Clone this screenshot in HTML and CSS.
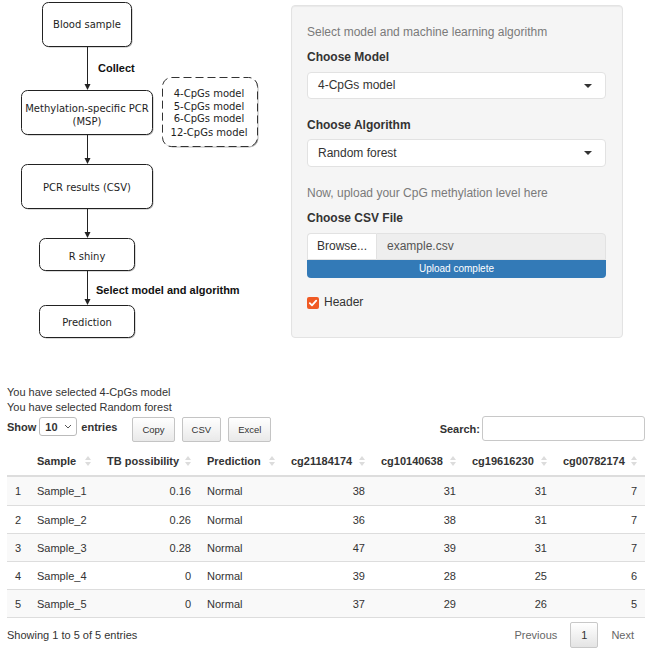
FILE: index.html
```html
<!DOCTYPE html>
<html>
<head>
<meta charset="utf-8">
<title>TB prediction</title>
<link rel="stylesheet" href="styles.css">
</head>
<body>
<div class="top">
  <svg class="flow" width="284" height="340" viewBox="0 0 284 340">
    <g class="shadow">
      <rect x="43.5" y="3.5" width="89" height="44" rx="6"/>
      <rect x="22.5" y="91.5" width="131" height="44" rx="6"/>
      <rect x="22.5" y="165.5" width="131" height="44" rx="6"/>
      <rect x="40.5" y="239.5" width="95" height="32" rx="6"/>
      <rect x="40.5" y="306.5" width="95" height="32" rx="6"/>
      <rect x="163.5" y="78.5" width="95" height="69" rx="9"/>
    </g>
    <g class="box">
      <rect x="42.5" y="2.5" width="89" height="44" rx="6"/>
      <rect x="21.5" y="90.5" width="131" height="44" rx="6"/>
      <rect x="21.5" y="164.5" width="131" height="44" rx="6"/>
      <rect x="39.5" y="238.5" width="95" height="32" rx="6"/>
      <rect x="39.5" y="305.5" width="95" height="32" rx="6"/>
    </g>
    <rect class="dash" x="162.5" y="77.5" width="95" height="69" rx="9"/>
    <g class="arrow">
      <line x1="87.5" y1="47" x2="87.5" y2="85"/>
      <line x1="87.5" y1="135" x2="87.5" y2="159"/>
      <line x1="87.5" y1="209" x2="87.5" y2="233"/>
      <line x1="87.5" y1="271" x2="87.5" y2="300"/>
    </g>
    <g class="head">
      <polygon points="84.5,84 90.5,84 87.5,90"/>
      <polygon points="84.5,158 90.5,158 87.5,164"/>
      <polygon points="84.5,232 90.5,232 87.5,238"/>
      <polygon points="84.5,299 90.5,299 87.5,305"/>
    </g>
    <g class="ftxt">
      <text x="87" y="28">Blood sample</text>
      <text x="87" y="111.5">Methylation-specific PCR</text>
      <text x="87" y="124.5">(MSP)</text>
      <text x="87" y="190.5">PCR results (CSV)</text>
      <text x="87" y="259.5">R shiny</text>
      <text x="87" y="325.5">Prediction</text>
      <text x="209" y="96.5">4-CpGs model</text>
      <text x="209" y="109.5">5-CpGs model</text>
      <text x="209" y="122">6-CpGs model</text>
      <text x="209" y="135.5">12-CpGs model</text>
    </g>
    <g class="etxt">
      <text x="98" y="72">Collect</text>
      <text x="96" y="294">Select model and algorithm</text>
    </g>
  </svg>

  <div class="well">
    <p class="help">Select model and machine learning algorithm</p>
    <div class="lbl">Choose Model</div>
    <div class="select"><span>4-CpGs model</span><svg class="caret" width="8" height="4" viewBox="0 0 8 4"><polygon points="0,0 8,0 4,4"/></svg></div>
    <div class="lbl gap">Choose Algorithm</div>
    <div class="select s2"><span>Random forest</span><svg class="caret" width="8" height="4" viewBox="0 0 8 4"><polygon points="0,0 8,0 4,4"/></svg></div>
    <p class="help gap">Now, upload your CpG methylation level here</p>
    <div class="lbl">Choose CSV File</div>
    <div class="file"><span class="browse">Browse...</span><span class="fname">example.csv</span></div>
    <div class="progress">Upload complete</div>
    <div class="check">
      <span class="cbox"><svg width="12" height="12" viewBox="0 0 12 12"><polyline points="2.8,6.2 5,8.4 9.2,3.6"/></svg></span>
      <span>Header</span>
    </div>
  </div>
</div>

<div class="output">
  <div class="msg">You have selected 4-CpGs model</div>
  <div class="msg">You have selected Random forest</div>
  <div class="controls">
    <div class="length">
      <span>Show</span>
      <div class="len-sel"><span>10</span><svg width="8" height="5" viewBox="0 0 8 5"><polyline points="1,1 4,4 7,1"/></svg></div>
      <span>entries</span>
    </div>
    <div class="buttons">
      <button class="btn">Copy</button>
      <button class="btn">CSV</button>
      <button class="btn">Excel</button>
    </div>
    <div class="search">
      <span>Search:</span>
      <div class="sinput"></div>
    </div>
  </div>

  <table class="dt">
    <colgroup>
      <col class="c0"><col class="c1"><col class="c2"><col class="c3"><col class="c4"><col class="c5"><col class="c6"><col class="c7">
    </colgroup>
    <thead>
      <tr>
        <th></th>
        <th>Sample<svg class="sort" width="6" height="12" viewBox="0 0 6 12"><polygon points="0,5 6,5 3,1"/><polygon points="0,7 6,7 3,11"/></svg></th>
        <th>TB possibility<svg class="sort" width="6" height="12" viewBox="0 0 6 12"><polygon points="0,5 6,5 3,1"/><polygon points="0,7 6,7 3,11"/></svg></th>
        <th>Prediction<svg class="sort" width="6" height="12" viewBox="0 0 6 12"><polygon points="0,5 6,5 3,1"/><polygon points="0,7 6,7 3,11"/></svg></th>
        <th>cg21184174<svg class="sort" width="6" height="12" viewBox="0 0 6 12"><polygon points="0,5 6,5 3,1"/><polygon points="0,7 6,7 3,11"/></svg></th>
        <th>cg10140638<svg class="sort" width="6" height="12" viewBox="0 0 6 12"><polygon points="0,5 6,5 3,1"/><polygon points="0,7 6,7 3,11"/></svg></th>
        <th>cg19616230<svg class="sort" width="6" height="12" viewBox="0 0 6 12"><polygon points="0,5 6,5 3,1"/><polygon points="0,7 6,7 3,11"/></svg></th>
        <th>cg00782174<svg class="sort" width="6" height="12" viewBox="0 0 6 12"><polygon points="0,5 6,5 3,1"/><polygon points="0,7 6,7 3,11"/></svg></th>
      </tr>
    </thead>
    <tbody>
      <tr><td>1</td><td>Sample_1</td><td class="num">0.16</td><td>Normal</td><td class="num">38</td><td class="num">31</td><td class="num">31</td><td class="num">7</td></tr>
      <tr><td>2</td><td>Sample_2</td><td class="num">0.26</td><td>Normal</td><td class="num">36</td><td class="num">38</td><td class="num">31</td><td class="num">7</td></tr>
      <tr><td>3</td><td>Sample_3</td><td class="num">0.28</td><td>Normal</td><td class="num">47</td><td class="num">39</td><td class="num">31</td><td class="num">7</td></tr>
      <tr><td>4</td><td>Sample_4</td><td class="num">0</td><td>Normal</td><td class="num">39</td><td class="num">28</td><td class="num">25</td><td class="num">6</td></tr>
      <tr><td>5</td><td>Sample_5</td><td class="num">0</td><td>Normal</td><td class="num">37</td><td class="num">29</td><td class="num">26</td><td class="num">5</td></tr>
    </tbody>
  </table>

  <div class="foot">
    <span class="info">Showing 1 to 5 of 5 entries</span>
    <div class="pager">
      <span class="pbtn">Previous</span>
      <span class="pbtn current">1</span>
      <span class="pbtn">Next</span>
    </div>
  </div>
</div>
</body>
</html>
```

FILE: styles.css
```css
* { box-sizing: border-box; }

body {
  margin: 0;
  font-family: "Liberation Sans", Arial, sans-serif;
  color: #333;
  background: #fff;
}

/* ---------- top area ---------- */
.top {
  display: flex;
  align-items: flex-start;
  height: 340px;
}

.flow { display: block; flex: none; }
.flow .shadow rect { fill: #b5b5b5; }
.flow .box rect { fill: #fff; stroke: #222; stroke-width: 1; }
.flow .dash { fill: #fff; stroke: #333; stroke-width: 1; stroke-dasharray: 8 4; }
.flow .arrow line { stroke: #222; stroke-width: 1; }
.flow .head polygon { fill: #222; }
.flow .ftxt text {
  font-family: "DejaVu Sans", sans-serif;
  font-size: 10px;
  fill: #1e1e1e;
  text-anchor: middle;
}
.flow .etxt text {
  font-family: "Liberation Sans", Arial, sans-serif;
  font-size: 11px;
  font-weight: bold;
  fill: #111;
}

.well {
  flex: none;
  margin-left: 7px;
  margin-top: 5px;
  width: 332px;
  height: 333px;
  background: #f5f5f5;
  border: 1px solid #e3e3e3;
  border-radius: 4px;
  box-shadow: inset 0 1px 1px rgba(0,0,0,.05);
  padding: 19px 16px 0 15px;
  display: flex;
  flex-direction: column;
  font-size: 12px;
  line-height: 15px;
}

.help { margin: 0; color: #7a7a7a; }
.lbl { font-weight: bold; margin-top: 10px; color: #333; }
.gap { margin-top: 19px; }

.select {
  margin-top: 7px;
  height: 27px;
  background: #fff;
  border: 1px solid #e2e2e2;
  border-radius: 4px;
  display: flex;
  align-items: center;
  justify-content: space-between;
  padding: 0 13px 0 10px;
  color: #333;
}
.select.s2 { margin-top: 6px; height: 28px; }
.caret polygon { fill: #333; }

.file {
  margin-top: 7px;
  height: 27px;
  display: flex;
}
.browse {
  width: 69px;
  background: #fff;
  border: 1px solid #e2e2e2;
  border-right: none;
  border-radius: 4px 0 0 0;
  display: flex;
  align-items: center;
  justify-content: center;
  color: #333;
}
.fname {
  flex: 1;
  background: #eee;
  border: 1px solid #e2e2e2;
  border-radius: 0 4px 0 0;
  display: flex;
  align-items: center;
  padding-left: 10px;
  color: #555;
}

.progress {
  height: 18px;
  background: #337ab7;
  border-radius: 0 0 4px 4px;
  color: #fff;
  font-size: 10px;
  line-height: 18px;
  text-align: center;
}

.check {
  margin-top: 17px;
  display: flex;
  align-items: center;
  gap: 5px;
}
.cbox {
  width: 12px;
  height: 12px;
  border-radius: 2px;
  background: #f05a24;
  display: block;
}
.cbox svg { display: block; }
.cbox polyline { fill: none; stroke: #fff; stroke-width: 1.8; stroke-linecap: round; stroke-linejoin: round; }

/* ---------- output area ---------- */
.output {
  margin-top: 45px;
  padding: 0 6px 0 7px;
  font-size: 11px;
}

.msg { line-height: 15px; }

.controls {
  margin-top: 2px;
  height: 25px;
  display: flex;
  align-items: flex-start;
}

.length {
  display: flex;
  align-items: center;
  height: 19px;
  font-weight: bold;
}
.len-sel {
  margin: 0 4px 0 3px;
  width: 38px;
  height: 19px;
  border: 1px solid #bbb;
  border-radius: 3px;
  background: #fff;
  display: flex;
  align-items: center;
  justify-content: space-between;
  padding: 0 4px 0 5px;
}
.len-sel polyline { fill: none; stroke: #555; stroke-width: 1; }

.buttons {
  display: flex;
  gap: 7px;
  margin-left: 15px;
}
.btn {
  height: 25px;
  padding: 0 9px;
  font-family: "Liberation Sans", Arial, sans-serif;
  font-size: 9.5px;
  color: #333;
  border: 1px solid #c4c4c4;
  border-radius: 2px;
  background: linear-gradient(to bottom, #ffffff 0%, #e9e9e9 100%);
}

.search {
  margin-left: auto;
  margin-top: -1px;
  display: flex;
  align-items: center;
  gap: 2px;
  font-weight: bold;
}
.sinput {
  width: 163px;
  height: 25px;
  border: 1px solid #c8c8c8;
  border-radius: 3px;
  background: #fff;
}

table.dt {
  margin-top: 5px;
  width: 638px;
  table-layout: fixed;
  border-collapse: separate;
  border-spacing: 0;
  font-size: 11px;
  color: #333;
}
.c0 { width: 22px; }
.c1 { width: 70px; }
.c2 { width: 100px; }
.c3 { width: 84px; }
.c4 { width: 90px; }
.c5 { width: 91px; }
.c6 { width: 91px; }
.c7 { width: 90px; }

table.dt th {
  position: relative;
  height: 30px;
  padding: 0 8px;
  text-align: left;
  font-weight: bold;
  border-bottom: 2px solid #ddd;
  white-space: nowrap;
}
.sort {
  position: absolute;
  right: 8px;
  top: 8px;
}
.sort polygon { fill: #dcdcdc; }

table.dt td {
  height: 28px;
  padding: 0 8px;
  border-top: 1px solid #ddd;
  white-space: nowrap;
}
table.dt tbody tr:first-child td { border-top: none; }
table.dt tbody tr:last-child td { height: 29px; border-bottom: 1px solid #ddd; }
table.dt tbody tr:nth-child(odd) td { background: #f9f9f9; }
table.dt td.num { text-align: right; }

.foot {
  margin-top: 4px;
  display: flex;
  align-items: center;
  justify-content: space-between;
  height: 26px;
}
.pager { display: flex; align-items: center; }
.pbtn {
  margin-left: 2px;
  padding: 0 11px;
  color: #666;
  line-height: 26px;
}
.pbtn.current {
  padding: 0 10px;
  color: #333;
  border: 1px solid #c8c8c8;
  border-radius: 2px;
  background: linear-gradient(to bottom, #ffffff 0%, #e4e4e4 100%);
  line-height: 24px;
}
```
